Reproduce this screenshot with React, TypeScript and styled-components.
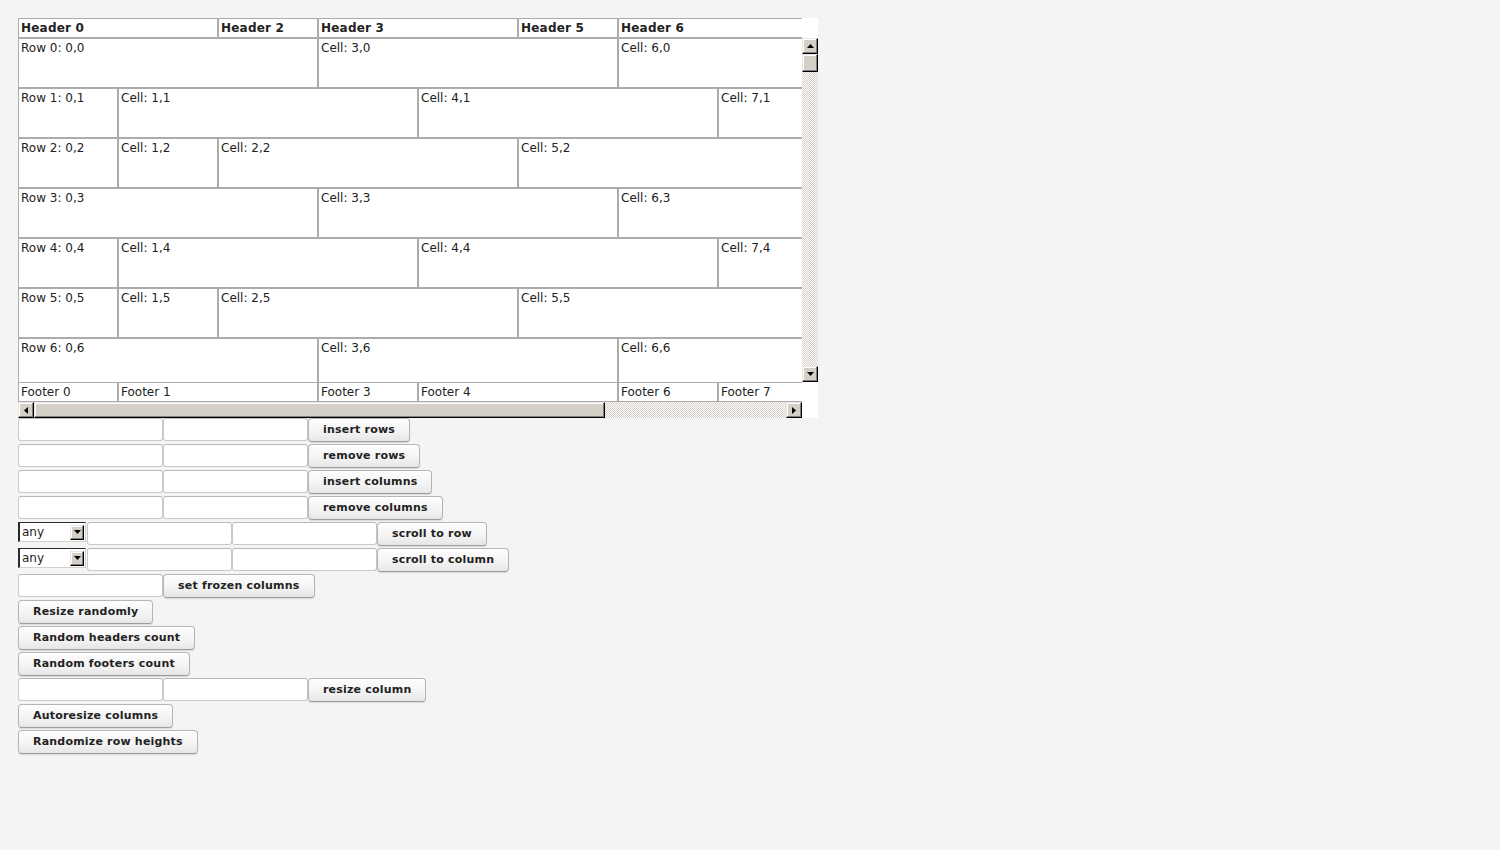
import React from "react";
import styled, { createGlobalStyle } from "styled-components";

const Global = createGlobalStyle`
  html, body { margin: 0; padding: 0; background: #f4f4f4; }
  body { font-family: "DejaVu Sans", Verdana, sans-serif; color: #222; }
`;

const Page = styled.div`
  padding: 18px;
  display: flex;
  flex-direction: column;
  align-items: flex-start;
`;

const Grid = styled.div`
  display: flex;
  width: 800px;
  height: 400px;
  background: #fff;
`;

const MainCol = styled.div`
  width: 784px;
  display: flex;
  flex-direction: column;
  overflow: hidden;
`;

const SideCol = styled.div`
  width: 16px;
  display: flex;
  flex-direction: column;
`;

const Corner = styled.div<{ $h: number }>`
  height: ${(p) => p.$h}px;
  background: #fff;
`;

const Body = styled.div`
  height: 344px;
  overflow: hidden;
  display: flex;
  flex-direction: column;
`;

const Row = styled.div<{ $h: number }>`
  display: flex;
  flex: none;
  height: ${(p) => p.$h}px;
`;

const Cell = styled.div<{ $span: number; $kind: "head" | "body" | "foot" }>`
  flex: none;
  box-sizing: border-box;
  width: ${(p) => p.$span * 100}px;
  height: 100%;
  border: 1px solid #acacac;
  padding: 0 2px;
  line-height: 18px;
  font-size: 12px;
  white-space: nowrap;
  overflow: hidden;
  background: #fff;
  color: #222;
  font-weight: ${(p) => (p.$kind === "head" ? 700 : 400)};
  letter-spacing: ${(p) => (p.$kind === "head" ? "0.2px" : "0")};
`;

const bevel = `
  box-sizing: border-box;
  background: #d4d0c8;
  border: 1px solid;
  border-color: #e8e6e1 #000 #000 #e8e6e1;
  box-shadow: inset -1px -1px #808080, inset 1px 1px #fff;
`;

const ScrollBtn = styled.div`
  ${bevel}
  width: 16px;
  height: 16px;
  flex: none;
  display: flex;
  align-items: center;
  justify-content: center;
`;

const Track = styled.div`
  flex: 1;
  background: repeating-conic-gradient(#d4d0c8 0 25%, #fff 0 50%) 0 0 / 2px 2px;
`;

const VScroll = styled.div`
  height: 344px;
  display: flex;
  flex-direction: column;
`;

const VThumb = styled.div`
  ${bevel}
  height: 18px;
  flex: none;
`;

const HScroll = styled.div`
  height: 16px;
  display: flex;
`;

const HThumb = styled.div`
  ${bevel}
  width: 571px;
  flex: none;
`;

const Controls = styled.div`
  display: flex;
  flex-direction: column;
`;

const CtrlRow = styled.div`
  display: flex;
  align-items: flex-start;
  height: 26px;
`;

const TextInput = styled.input`
  box-sizing: border-box;
  width: 145px;
  height: 23px;
  margin: 0;
  border: 1px solid #c9c9c9;
  border-top-color: #b9b9b9;
  border-radius: 3px;
  background: #fff;
  font-family: "DejaVu Sans", sans-serif;
  font-size: 12px;
  padding: 0 3px;
`;

const Btn = styled.button`
  box-sizing: border-box;
  height: 24px;
  margin: 0;
  padding: 0 14px 2px;
  border: 1px solid #b5b5b5;
  border-bottom-color: #9c9c9c;
  border-radius: 4px;
  background: linear-gradient(to bottom, #fdfdfd 0%, #f3f3f3 60%, #e6e6e6 100%);
  box-shadow: 0 1px 1px rgba(0, 0, 0, 0.12), inset 0 1px #fff;
  font-family: "DejaVu Sans", sans-serif;
  font-weight: 700;
  font-size: 11px;
  letter-spacing: 0.2px;
  color: #222;
  white-space: nowrap;
  cursor: pointer;
`;

const Select = styled.div`
  box-sizing: border-box;
  width: 68px;
  height: 20px;
  margin-right: 1px;
  background: #fff;
  border: 1px solid;
  border-width: 1px 1px 1px 2px;
  border-color: #2a2a2a #d4d0c8 #d4d0c8 #2a2a2a;
  display: flex;
  align-items: center;
  justify-content: space-between;
  padding: 0 1px 0 2px;
  font-size: 12px;
  color: #222;
`;

const SelectArrow = styled.div`
  ${bevel}
  width: 14px;
  height: 15px;
  display: flex;
  align-items: center;
  justify-content: center;
`;

const Arrow = ({ dir }: { dir: "up" | "down" | "left" | "right" }) => {
  const pts = {
    up: "0,4 3.5,0 7,4",
    down: "0,0 3.5,4 7,0",
    left: "4,0 0,3.5 4,7",
    right: "0,0 4,3.5 0,7",
  }[dir];
  const vertical = dir === "up" || dir === "down";
  return (
    <svg width={vertical ? 7 : 4} height={vertical ? 4 : 7} viewBox={vertical ? "0 0 7 4" : "0 0 4 7"}>
      <polygon points={pts} fill="#000" />
    </svg>
  );
};

type C = { t: string; s: number };

const header: C[] = [
  { t: "Header 0", s: 2 },
  { t: "Header 2", s: 1 },
  { t: "Header 3", s: 2 },
  { t: "Header 5", s: 1 },
  { t: "Header 6", s: 2 },
];

const footer: C[] = [
  { t: "Footer 0", s: 1 },
  { t: "Footer 1", s: 2 },
  { t: "Footer 3", s: 1 },
  { t: "Footer 4", s: 2 },
  { t: "Footer 6", s: 1 },
  { t: "Footer 7", s: 1 },
];

const bodyRow = (n: number): C[] => {
  const first = `Row ${n}: 0,${n}`;
  switch (n % 3) {
    case 0:
      return [
        { t: first, s: 3 },
        { t: `Cell: 3,${n}`, s: 3 },
        { t: `Cell: 6,${n}`, s: 3 },
      ];
    case 1:
      return [
        { t: first, s: 1 },
        { t: `Cell: 1,${n}`, s: 3 },
        { t: `Cell: 4,${n}`, s: 3 },
        { t: `Cell: 7,${n}`, s: 3 },
      ];
    default:
      return [
        { t: first, s: 1 },
        { t: `Cell: 1,${n}`, s: 1 },
        { t: `Cell: 2,${n}`, s: 3 },
        { t: `Cell: 5,${n}`, s: 3 },
      ];
  }
};

const AnySelect = () => (
  <Select>
    <span>any</span>
    <SelectArrow>
      <Arrow dir="down" />
    </SelectArrow>
  </Select>
);

export default function App() {
  return (
    <>
      <Global />
      <Page>
        <Grid>
          <MainCol>
            <Row $h={20}>
              {header.map((c) => (
                <Cell key={c.t} $span={c.s} $kind="head">
                  {c.t}
                </Cell>
              ))}
            </Row>
            <Body>
              {[0, 1, 2, 3, 4, 5, 6].map((n) => (
                <Row key={n} $h={50}>
                  {bodyRow(n).map((c) => (
                    <Cell key={c.t} $span={c.s} $kind="body">
                      {c.t}
                    </Cell>
                  ))}
                </Row>
              ))}
            </Body>
            <Row $h={20}>
              {footer.map((c) => (
                <Cell key={c.t} $span={c.s} $kind="foot">
                  {c.t}
                </Cell>
              ))}
            </Row>
            <HScroll>
              <ScrollBtn>
                <Arrow dir="left" />
              </ScrollBtn>
              <HThumb />
              <Track />
              <ScrollBtn>
                <Arrow dir="right" />
              </ScrollBtn>
            </HScroll>
          </MainCol>
          <SideCol>
            <Corner $h={20} />
            <VScroll>
              <ScrollBtn>
                <Arrow dir="up" />
              </ScrollBtn>
              <VThumb />
              <Track />
              <ScrollBtn>
                <Arrow dir="down" />
              </ScrollBtn>
            </VScroll>
            <Corner $h={36} />
          </SideCol>
        </Grid>
        <Controls>
          <CtrlRow>
            <TextInput />
            <TextInput />
            <Btn>insert rows</Btn>
          </CtrlRow>
          <CtrlRow>
            <TextInput />
            <TextInput />
            <Btn>remove rows</Btn>
          </CtrlRow>
          <CtrlRow>
            <TextInput />
            <TextInput />
            <Btn>insert columns</Btn>
          </CtrlRow>
          <CtrlRow>
            <TextInput />
            <TextInput />
            <Btn>remove columns</Btn>
          </CtrlRow>
          <CtrlRow>
            <AnySelect />
            <TextInput />
            <TextInput />
            <Btn>scroll to row</Btn>
          </CtrlRow>
          <CtrlRow>
            <AnySelect />
            <TextInput />
            <TextInput />
            <Btn>scroll to column</Btn>
          </CtrlRow>
          <CtrlRow>
            <TextInput />
            <Btn>set frozen columns</Btn>
          </CtrlRow>
          <CtrlRow>
            <Btn>Resize randomly</Btn>
          </CtrlRow>
          <CtrlRow>
            <Btn>Random headers count</Btn>
          </CtrlRow>
          <CtrlRow>
            <Btn>Random footers count</Btn>
          </CtrlRow>
          <CtrlRow>
            <TextInput />
            <TextInput />
            <Btn>resize column</Btn>
          </CtrlRow>
          <CtrlRow>
            <Btn>Autoresize columns</Btn>
          </CtrlRow>
          <CtrlRow>
            <Btn>Randomize row heights</Btn>
          </CtrlRow>
        </Controls>
      </Page>
    </>
  );
}
